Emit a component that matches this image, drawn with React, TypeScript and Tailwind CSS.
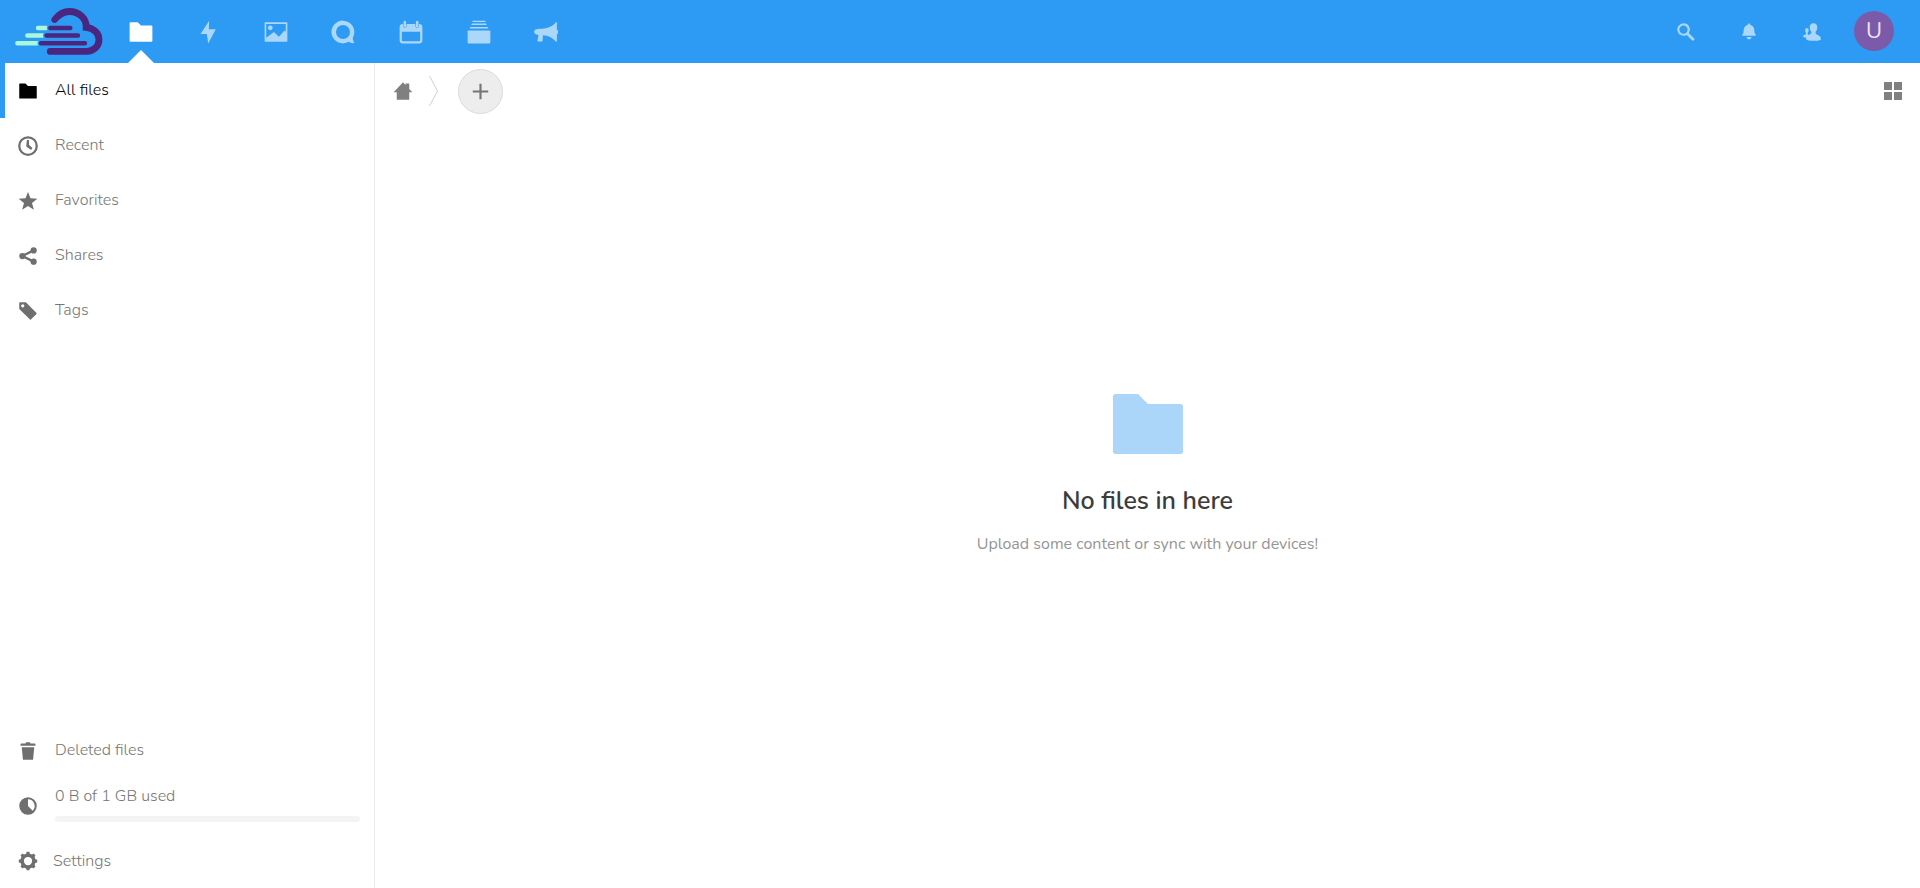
import type { ReactNode } from "react";

type IconProps = { className?: string; children: ReactNode };

function Icon({ className = "size-5", children }: IconProps) {
  return (
    <svg viewBox="0 0 16 16" fill="currentColor" aria-hidden="true" className={`block shrink-0 ${className}`}>
      {children}
    </svg>
  );
}

const folderShape = (
  <path d="M1.500 2a.5.500 0 0 0-.5.500v11a.5.500 0 0 0 .5.500h13a.5.500 0 0 0 .5-.5v-9a.5.500 0 0 0-.5-.5H8L6 2z" />
);

function Logo() {
  return (
    <svg viewBox="0 0 108 63" className="block h-[63px] w-[108px]" fill="none" strokeLinecap="round" aria-hidden="true">
      <g stroke="#a9f8dc" strokeWidth="4.400">
        <path d="M38 28h9M27.300 35.500h16M17.300 43.200h21" />
      </g>
      <g stroke="#2d9bf3" strokeWidth="7">
        <path d="M50.300 28h20M46.500 35.500h30M41 43.200h40" />
      </g>
      <g stroke="#4a2680" strokeWidth="4.400">
        <path d="M50.300 28h20M46.500 35.500h31.500M41 43.200h44" />
      </g>
      <path
        d="M54.800 19.500C58.800 14.500 63.500 11.500 69.500 11.500C79.500 11.500 86.500 19 86.200 27.300C93.500 28 99 33 99 39.500C99 46.500 93.500 51.400 86.500 51.400H50.300"
        stroke="#4a2680"
        strokeWidth="6.800"
      />
    </svg>
  );
}

const apps = [
  { label: "Files", icon: folderShape },
  { label: "Activity", icon: <path d="M8.700 1L3.400 9.200h3.900L8.100 15l4.700-8.700H8.500z" /> },
  {
    label: "Photos",
    icon: (
      <>
        <path
          fillRule="evenodd"
          d="M1.500 2h13a.5.500 0 0 1 .5.500v11a.5.500 0 0 1-.5.500h-13a.5.500 0 0 1-.5-.5v-11a.5.500 0 0 1 .5-.5zM2 3v8.500L6.700 8l3.100 2.900L13.200 7l.8.800V3z"
        />
        <circle cx="4.500" cy="5.400" r="1.450" />
      </>
    ),
  },
  {
    label: "Talk",
    icon: (
      <path
        fillRule="evenodd"
        d="M8 1a7 7 0 1 0 3.500 13c.9.700 2.200 1.100 3.200.8.200-.1.300-.3.200-.5-.6-.7-1-1.900-.8-2.900A7 7 0 0 0 8 1zm0 2.700a4.300 4.300 0 1 1 0 8.600 4.300 4.300 0 0 1 0-8.600z"
      />
    ),
  },
  {
    label: "Calendar",
    icon: (
      <>
        <path
          fillRule="evenodd"
          d="M3 3h.1v1.200c0 .8.400 1.400 1.100 1.400s1.100-.6 1.100-1.400V3h5.400v1.200c0 .8.400 1.400 1.100 1.400s1.100-.6 1.100-1.400V3h.1a2 2 0 0 1 2 2v8a2 2 0 0 1-2 2H3a2 2 0 0 1-2-2V5a2 2 0 0 1 2-2zm-.6 4.800v5.200c0 .4.300.7.700.7h9.800c.4 0 .7-.3.700-.7V7.800z"
        />
        <rect x="3.400" y="1" width="1.600" height="4.200" rx=".8" />
        <rect x="11" y="1" width="1.600" height="4.200" rx=".8" />
      </>
    ),
  },
  {
    label: "Deck",
    icon: (
      <>
        <rect x="1" y="7" width="14" height="8" rx=".6" />
        <path d="M4.200 1h7.600l.3.800H3.900zM3.600 2.800h8.800l.4.900H3.200zM2.700 4.900h10.600l.5.900H2.200z" />
      </>
    ),
  },
  {
    label: "Announcements",
    icon: (
      <path d="M14 2.200c-2 2.400-4.400 3.400-8.600 3.800-2.300.1-3.400.1-4.100.6-.7.400-.8 2.100 0 2.600l1.500.5.600.3-.7 3.300c0 .4.200.6.600.6h2c.4 0 .6-.2.600-.6L6.100 10c3.400.1 5.900 1.500 7.900 3.800.5.500.7.200.7-.3V9.600c1-.4 1-2.700 0-3.100v-4c0-.6-.3-.8-.7-.3z" />
    ),
  },
];

const tools = [
  {
    label: "Search",
    icon: (
      <path
        fillRule="evenodd"
        d="M6 1a5 5 0 1 0 2.600 9.300l4.200 4.200c.5.500 1.100.5 1.600 0s.5-1 0-1.500l-4.200-4.200A5 5 0 0 0 6 1zm0 1.800a3.300 3.300 0 1 1 0 6.600 3.300 3.300 0 0 1 0-6.600z"
      />
    ),
  },
  {
    label: "Notifications",
    icon: (
      <path d="M8 1.200c-.6 0-.9.400-.9.900-2 .4-3.100 2-3.300 3.900-.2 2.200-.2 3.200-1.200 3.900v1h10.800v-1c-1-.7-1-1.700-1.200-3.900-.2-1.900-1.300-3.500-3.300-3.900 0-.5-.3-.9-.9-.9zM6 11.900c.2 1.200.9 1.900 2 1.900s1.800-.7 2-1.900z" />
    ),
  },
  {
    label: "Contacts",
    icon: (
      <path d="M9.200 1C7.300 1 6 2.300 6.200 4.500c.1 1.400.5 2.500 1.200 3.200v1.500c-.6.500-1.300.8-2.100 1.100L4.500 9.700v-1c.6-.7.800-1.500.8-2.300C5.300 5.300 4.700 5 3.900 5s-1.500.5-1.400 1.600c0 .8.200 1.500.7 2.100v1C2.200 10.300 1 10.300.9 11.300c0 .7 1.100.9 2.400 1v1.500C4 14.700 6.300 15 9.200 15c3 0 5.900-.3 5.900-1.300 0-2.900-2.400-2.900-4.200-4.500V7.700c.8-.8 1.200-1.900 1.300-3.200C12.400 2.300 11.100 1 9.200 1z" />
    ),
  },
];

const places = [
  { label: "All files", icon: folderShape },
  {
    label: "Recent",
    icon: (
      <>
        <circle cx="8" cy="8" r="7" fill="none" stroke="currentColor" strokeWidth="1.800" />
        <path d="M7.100 3.200h1.600l.2 4 2.600 2.400-1 1.500-3.900-2.700z" />
      </>
    ),
  },
  {
    label: "Favorites",
    icon: <path d="M8 .7l2 5.100 5.500.3-4.300 3.500 1.500 5.400L8 12l-4.700 3 1.500-5.400L.5 6.100 6 5.800z" />,
  },
  {
    label: "Shares",
    icon: (
      <>
        <path d="M12.500 3.500L3.500 8l9 4.500" fill="none" stroke="currentColor" strokeWidth="1.800" />
        <circle cx="12.500" cy="3.500" r="2.500" />
        <circle cx="3.500" cy="8" r="2.500" />
        <circle cx="12.500" cy="12.500" r="2.500" />
      </>
    ),
  },
  {
    label: "Tags",
    icon: (
      <path
        fillRule="evenodd"
        d="M1.500 1A.5.500 0 0 0 1 1.500v4.800l8.600 8.500c.2.200.5.200.7 0l4.500-4.500c.2-.2.200-.5 0-.7L6.300 1zm2.300 1.500a1.300 1.300 0 1 1 0 2.600 1.300 1.300 0 0 1 0-2.600z"
      />
    ),
  },
];

const trashShape = (
  <path d="M6.500 1L6 2H3c-.6 0-1 .4-1 1v.8h12V3c0-.6-.4-1-1-1h-3l-.5-1zM3 5l.9 9.500c0 .3.200.5.500.5h7.200c.3 0 .5-.2.500-.5L13 5z" />
);

const quotaShape = (
  <path
    fillRule="evenodd"
    d="M8 1a7 7 0 1 0 0 14A7 7 0 0 0 8 1zm0 1.700a5.300 5.300 0 0 1 3.800 9L8 8z"
  />
);

const teeth = [0, 45, 90, 135, 180, 225, 270, 315];

const gearShape = (
  <>
    <circle cx="8" cy="8" r="4.700" fill="none" stroke="currentColor" strokeWidth="2.800" />
    {teeth.map((angle) => (
      <path key={angle} d="M6.400 3L6.900.6h2.200L9.600 3z" transform={`rotate(${angle} 8 8)`} />
    ))}
  </>
);

const rowClass = "flex h-[55px] w-full items-center pl-[18px] text-left text-[#767676]";

export default function App() {
  return (
    <div className="flex min-h-screen flex-col bg-white font-['Nunito','Lato',sans-serif] text-[16px] leading-6 font-light">
      <header className="flex h-[63px] items-center justify-between bg-[#2d9bf3] pr-[15px]">
        <div className="flex items-center">
          <a href="#home" aria-label="Home">
            <Logo />
          </a>
          <nav aria-label="Apps" className="-ml-px grid w-[473px] grid-cols-7">
            {apps.map((app, i) => (
              <a
                key={app.label}
                href={`#${app.label.toLowerCase()}`}
                aria-label={app.label}
                className={`relative flex h-[63px] items-center justify-center ${i === 0 ? "text-white" : "text-[#abd7fa]"}`}
              >
                <Icon className="size-[26px]">{app.icon}</Icon>
                {i === 0 && (
                  <svg viewBox="0 0 26 13" className="absolute bottom-0 h-[13px] w-[26px]" fill="#fff" aria-hidden="true">
                    <path d="M13 0l13 13H0z" />
                  </svg>
                )}
              </a>
            ))}
          </nav>
        </div>
        <div className="flex items-center">
          {tools.map((tool) => (
            <button
              key={tool.label}
              type="button"
              aria-label={tool.label}
              className="flex h-[63px] w-[63px] items-center justify-center text-[#abd7fa]"
            >
              <Icon>{tool.icon}</Icon>
            </button>
          ))}
          <button type="button" className="flex h-[63px] w-[62px] items-center justify-center pb-px">
            <span className="flex size-10 items-center justify-center rounded-full bg-[#7b5ba9] text-[22px] font-normal text-[#eee6f5]">
              U
            </span>
          </button>
        </div>
      </header>

      <div className="flex flex-1">
        <aside className="flex w-[375px] shrink-0 flex-col justify-between border-r border-[#e9e9e9]">
          <nav aria-label="Places">
            {places.map((place, i) => (
              <a
                key={place.label}
                href={`#${place.label.toLowerCase().replace(" ", "-")}`}
                className={
                  i === 0
                    ? "flex h-[55px] items-center border-l-[5px] border-[#2d9bf3] pl-[13px] text-black"
                    : rowClass
                }
              >
                <Icon className={i === 0 ? "size-5 text-black" : "size-5 text-[#6f6f6f]"}>{place.icon}</Icon>
                <span className="pb-0.5 pl-[17px]">{place.label}</span>
              </a>
            ))}
          </nav>
          <div>
            <a href="#deleted" className={rowClass}>
              <Icon className="size-5 text-[#6f6f6f]">{trashShape}</Icon>
              <span className="pb-0.5 pl-[17px]">Deleted files</span>
            </a>
            <a href="#quota" className={rowClass}>
              <Icon className="size-5 text-[#6f6f6f]">{quotaShape}</Icon>
              <span className="flex flex-1 flex-col gap-2 pr-3.5 pb-1.5 pl-[17px]">
                <span>0 B of 1 GB used</span>
                <span className="block h-1.5 rounded-full bg-[#f4f4f4]" />
              </span>
            </a>
            <button type="button" className={rowClass}>
              <Icon className="size-5 text-[#6f6f6f]">{gearShape}</Icon>
              <span className="pl-[15px]">Settings</span>
            </button>
          </div>
        </aside>

        <main className="flex flex-1 flex-col">
          <div className="flex h-14 items-center justify-between pr-[17px] pl-[18px] text-[#808080]">
            <div className="flex items-center">
              <a href="#root" aria-label="All files">
                <Icon>
                  <path d="M8 1L.5 9H3v6h10V9h2.500L13 6.300V2h-3v1.100z" />
                </Icon>
              </a>
              <svg viewBox="0 0 10 30" className="ml-4 h-[30px] w-2.5" fill="none" stroke="#d0d0d0" aria-hidden="true">
                <path d="M.5 0L8.500 15L.5 30" />
              </svg>
              <button
                type="button"
                aria-label="New file"
                className="ml-[19px] flex size-[45px] items-center justify-center rounded-full border border-[#dbdbdb] bg-[#ededed] text-[#757575]"
              >
                <Icon className="size-[19px]">
                  <path d="M7.100 1.500h1.800v5.600h5.600v1.800H8.900v5.600H7.100V8.900H1.500V7.100h5.600z" />
                </Icon>
              </button>
            </div>
            <button type="button" aria-label="Grid view">
              <Icon>
                <path d="M.8.800h6.400v6.400H.8zM8.800.800h6.400v6.400H8.800zM.8 8.800h6.400v6.400H.8zM8.800 8.800h6.400v6.400H8.800z" />
              </Icon>
            </button>
          </div>
          <section className="flex flex-1 flex-col items-center justify-center pb-[68px] text-center">
            <Icon className="size-20 text-[#abd6fa]">{folderShape}</Icon>
            <h2 className="mt-[22px] text-[25px] leading-[30px] font-semibold text-[#3c3c3c]">No files in here</h2>
            <p className="mt-4 font-normal text-[#959595]">Upload some content or sync with your devices!</p>
          </section>
        </main>
      </div>
    </div>
  );
}
